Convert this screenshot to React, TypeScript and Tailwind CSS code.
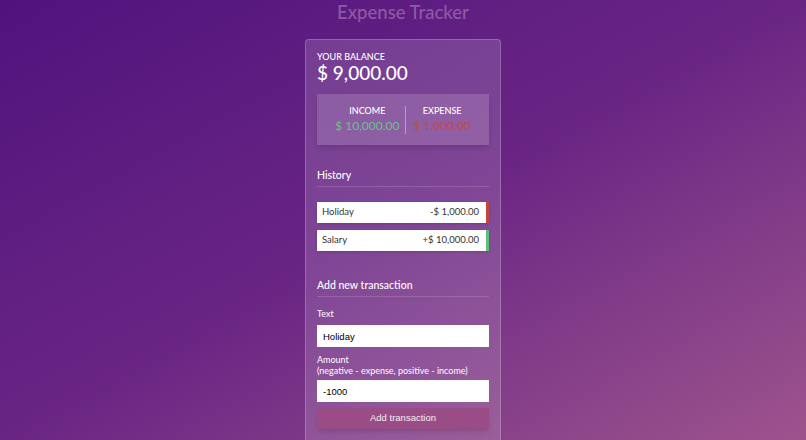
import React from 'react'

type Tx = { id: number; text: string; amount: number }

const transactions: Tx[] = [
  { id: 1, text: 'Holiday', amount: -1000 },
  { id: 2, text: 'Salary', amount: 10000 },
]

function money(n: number): string {
  return Math.abs(n).toLocaleString('en-US', { minimumFractionDigits: 2, maximumFractionDigits: 2 })
}

function TxItem({ tx }: { tx: Tx }) {
  const neg = tx.amount < 0
  return (
    <li
      className={`flex items-center justify-between bg-white h-[21px] pl-[5px] pr-[7px] text-[9.5px] text-[#333] shadow-sm border-r-[3px] ${
        neg ? 'border-[#c0463f]' : 'border-[#5cc07a]'
      }`}
    >
      <span>{tx.text}</span>
      <span>
        {neg ? '-' : '+'}$ {money(tx.amount)}
      </span>
    </li>
  )
}

export default function App() {
  const total = transactions.reduce((s, t) => s + t.amount, 0)
  const income = transactions.filter((t) => t.amount > 0).reduce((s, t) => s + t.amount, 0)
  const expense = transactions.filter((t) => t.amount < 0).reduce((s, t) => s - t.amount, 0)

  return (
    <div
      className="h-[440px] w-full overflow-hidden bg-gradient-to-br from-[#50127d] via-[#6a2584] to-[#9e538c] text-white"
      style={{ fontFamily: 'Lato, "Open Sans", sans-serif' }}
    >
      <h1 className="text-center text-[18.5px] leading-[24px] font-medium text-[#8e5aa4]">Expense Tracker</h1>

      <div className="mx-auto mt-[15px] w-[196px] rounded-[4px] border border-white/20 bg-white/15 px-[11px] pt-[11px] pb-6">
        <h4 className="text-[9px] leading-[11px] font-medium uppercase">Your Balance</h4>
        <h2 className="text-[19px] leading-[22px] font-medium">$ {money(total)}</h2>

        <div className="mt-[10px] flex h-[51px] items-center justify-center bg-white/15 shadow-md">
          <div className="flex flex-col items-center pr-[6px]">
            <span className="text-[9px] leading-[12px] font-medium uppercase">Income</span>
            <span className="text-[12px] leading-[16px] mt-[1px] text-[#6cc08b]">$ {money(income)}</span>
          </div>
          <div className="h-[28px] w-px bg-white/40" />
          <div className="flex flex-col items-center pl-[7px]">
            <span className="text-[9px] leading-[12px] font-medium uppercase">Expense</span>
            <span className="text-[12px] leading-[16px] mt-[1px] text-[#c44a45]">$ {money(expense)}</span>
          </div>
        </div>

        <h3 className="mt-[22px] text-[10.5px] leading-[16px] font-medium pb-[3px] border-b border-white/15">
          History
        </h3>
        <ul className="mt-[15px] flex flex-col gap-[7px]">
          {transactions.map((tx) => (
            <TxItem key={tx.id} tx={tx} />
          ))}
        </ul>

        <h3 className="mt-[26px] text-[10.5px] leading-[16px] font-medium pb-[3px] border-b border-white/15">
          Add new transaction
        </h3>
        <form className="mt-[11px]">
          <label className="block text-[9px] leading-[12px]">Text</label>
          <input
            defaultValue="Holiday"
            className="mt-[5px] block w-full h-[22px] bg-white px-[6px] text-[9.5px] text-black outline-none"
            style={{ fontFamily: '"Liberation Sans", Arial, sans-serif' }}
          />
          <label className="mt-[7px] block text-[9px] leading-[11px]">
            Amount
            <br />
            (negative - expense, positive - income)
          </label>
          <input
            defaultValue="-1000"
            className="mt-[4px] block w-full h-[22px] bg-white px-[6px] text-[9.5px] text-black outline-none"
            style={{ fontFamily: '"Liberation Sans", Arial, sans-serif' }}
          />
          <button
            type="button"
            className="mt-[6px] block w-full h-[21px] bg-[#9a4c86] text-[9.5px] text-white/90 shadow-md"
            style={{ fontFamily: '"Liberation Sans", Arial, sans-serif' }}
          >
            Add transaction
          </button>
        </form>
      </div>
    </div>
  )
}
